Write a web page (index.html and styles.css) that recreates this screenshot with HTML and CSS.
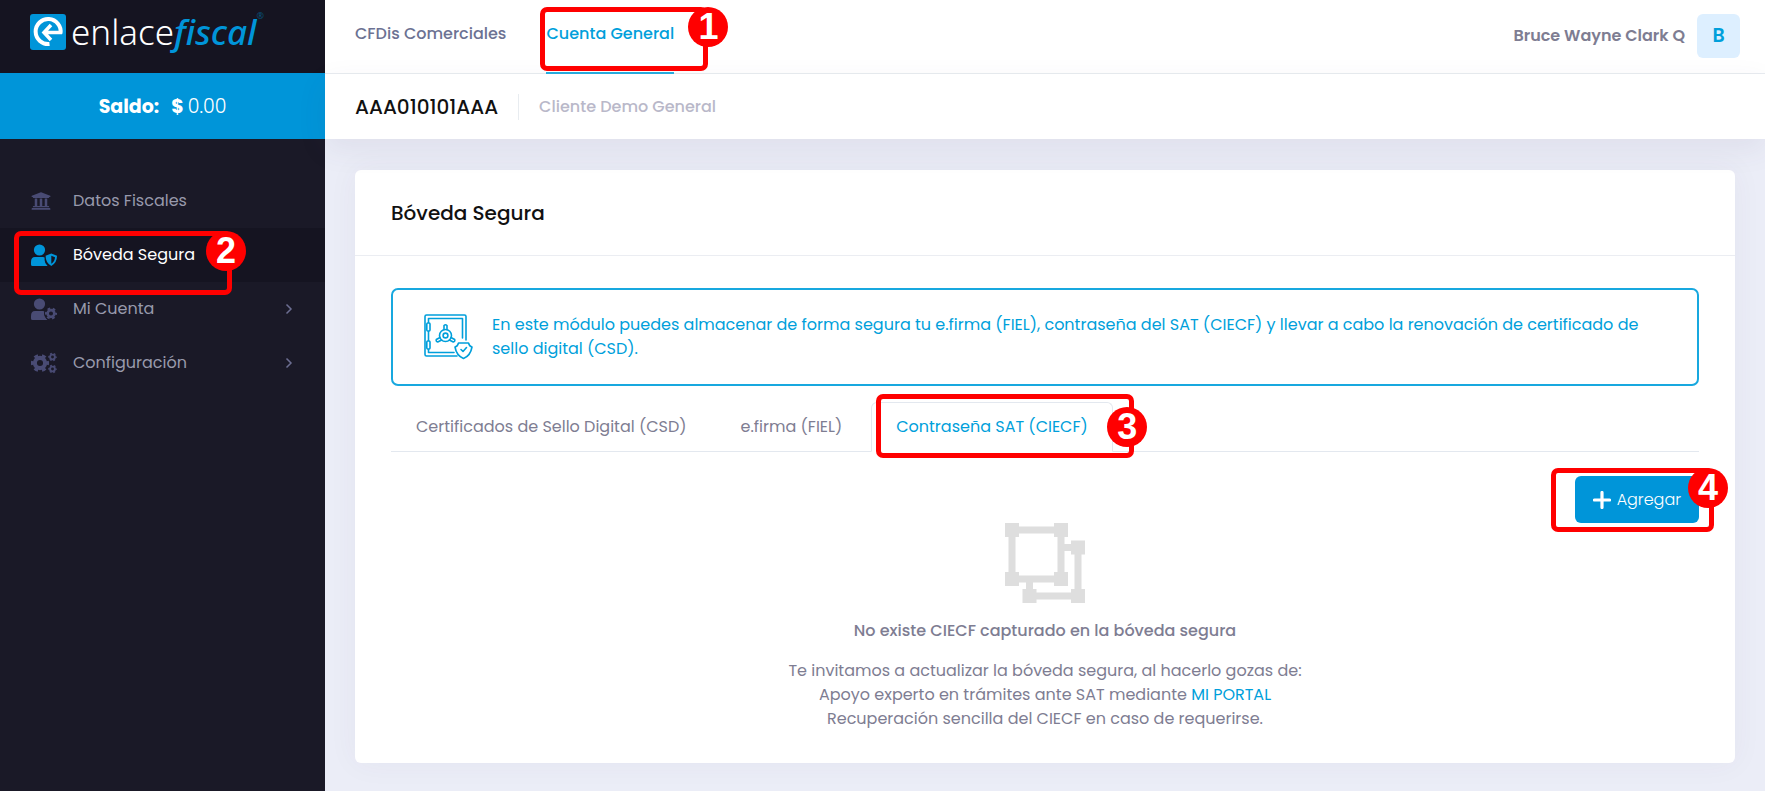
FILE: index.html
```html
<!DOCTYPE html>
<html lang="es">

<head>
    <meta charset="UTF-8" />
    <meta name="viewport" content="width=device-width, initial-scale=1.0" />
    <title>Enlace Fiscal - Bóveda Segura</title>
    <link rel="stylesheet" href="styles.css">
</head>

<body>
    <!-- Shared icon shapes -->
    <svg width="0" height="0" class="icon-defs" aria-hidden="true">
        <defs>
            <g id="gear">
                <circle r="5" fill="none" stroke="currentColor" stroke-width="4" />
                <circle r="7.4" fill="none" stroke="currentColor" stroke-width="3" pathLength="60" stroke-dasharray="5 5" stroke-dashoffset="2.5" />
            </g>
            <g id="user">
                <circle cx="8.5" cy="6" r="5.6" fill="currentColor" />
                <path d="M4 13h8q1 0 1.600 .4v2.600q0 3.500 3 6H1.500Q0 22 0 20.500V18q0-5 4-5z" fill="currentColor" />
            </g>
        </defs>
    </svg>

    <aside class="sidebar">
        <a href="#" class="brand">
            <svg width="36" height="36" viewBox="0 0 36 36" aria-hidden="true">
                <rect width="36" height="36" rx="3" fill="#0095d9" />
                <path d="M30.500 19.500A12.500 12.500 0 1 0 19.500 30" fill="none" stroke="#fff" stroke-width="4" />
                <path d="M32 18.500H15M21 11l-7 7.500 7 7.500" fill="none" stroke="#fff" stroke-width="3.500" />
            </svg>
            <span class="brand-enlace">enlace</span><span class="brand-fiscal">fiscal</span><span class="brand-mark">®</span>
        </a>

        <div class="saldo">
            <strong>Saldo:</strong>
            <strong class="currency">$</strong>
            <span>0.00</span>
        </div>

        <nav class="menu">
            <a href="#" class="menu-item">
                <svg width="20" height="20" viewBox="0 0 512 512" fill="currentColor" aria-hidden="true">
                    <path d="M496 128v16a8 8 0 0 1-8 8h-24v12c0 6.627-5.373 12-12 12H60c-6.627 0-12-5.373-12-12v-12H24a8 8 0 0 1-8-8v-16a8 8 0 0 1 4.941-7.392l232-88a7.996 7.996 0 0 1 6.118 0l232 88A8 8 0 0 1 496 128zm-24 304H40c-13.255 0-24 10.745-24 24v16a8 8 0 0 0 8 8h464a8 8 0 0 0 8-8v-16c0-13.255-10.745-24-24-24zM96 192v192H60c-6.627 0-12 5.373-12 12v20h416v-20c0-6.627-5.373-12-12-12h-36V192h-64v192h-64V192h-64v192h-64V192H96z" />
                </svg>
                <span>Datos Fiscales</span>
            </a>
            <a href="#" class="menu-item active">
                <svg width="26" height="22" viewBox="0 0 26 22" aria-hidden="true">
                    <use href="#user" />
                    <path d="M20.300 9.500l5.700 2.300q0 7-5.700 10.200-5.700-3.200-5.700-10.200z" fill="currentColor" />
                    <path d="M20.300 11.700l3.700 1.500q-.2 4.300-3.700 6.500z" fill="#151421" />
                </svg>
                <span>Bóveda Segura</span>
                <span class="callout callout-menu"><b>2</b></span>
            </a>
            <a href="#" class="menu-item">
                <svg width="26" height="22" viewBox="0 0 26 22" aria-hidden="true">
                    <use href="#user" />
                    <circle cx="20" cy="15.500" r="7" fill="#1a1927" />
                    <use href="#gear" transform="translate(20 15.500) scale(.68)" />
                </svg>
                <span>Mi Cuenta</span>
                <svg class="chevron" width="8" height="12" viewBox="0 0 8 12" aria-hidden="true"><path d="M1.500 1.500L6 6l-4.500 4.500" /></svg>
            </a>
            <a href="#" class="menu-item">
                <svg width="26" height="22" viewBox="0 0 26 22" aria-hidden="true">
                    <use href="#gear" transform="translate(9 11) scale(1.020)" />
                    <use href="#gear" transform="translate(21.500 5) scale(.48)" />
                    <use href="#gear" transform="translate(21.500 17) scale(.48)" />
                </svg>
                <span>Configuración</span>
                <svg class="chevron" width="8" height="12" viewBox="0 0 8 12" aria-hidden="true"><path d="M1.500 1.500L6 6l-4.500 4.500" /></svg>
            </a>
        </nav>
    </aside>

    <div class="wrapper">
        <header class="topbar">
            <nav class="topnav">
                <a href="#">CFDis Comerciales</a>
                <a href="#" class="active">Cuenta General<span class="callout callout-top"><b>1</b></span></a>
            </nav>
            <div class="profile">
                <span>Bruce Wayne Clark Q</span>
                <button type="button" class="avatar">B</button>
            </div>
        </header>

        <div class="subheader">
            <h3>AAA010101AAA</h3>
            <span class="client">Cliente Demo General</span>
        </div>

        <main class="content">
            <section class="card">
                <div class="card-header">
                    <h2>Bóveda Segura</h2>
                </div>
                <div class="card-body">
                    <div class="notice">
                        <svg width="50" height="46" viewBox="0 0 50 46" fill="none" stroke="currentColor" stroke-width="1.600" stroke-linejoin="round" stroke-linecap="round" aria-hidden="true">
                            <path d="M42 26V2.500Q42 1 40.500 1h-38Q1 1 1 2.500v38Q1 42 2.500 42H33" />
                            <path d="M38.500 24V4.500h-34V9M4.500 17v10M4.500 35v3.500H30" />
                            <rect x="2.800" y="9" width="3.200" height="8" rx="1" fill="#fff" />
                            <rect x="2.800" y="27" width="3.200" height="8" rx="1" fill="#fff" />
                            <circle cx="21.500" cy="21.500" r="6" />
                            <circle cx="21.500" cy="21.500" r="2.400" />
                            <path d="M20 15.500v-4q1.500-1.500 3 0v4M16 23.500l-3.700 2q-.6 2 1.400 2.500l4-2M27 23.500l3.700 2q.6 2-1.400 2.500l-4-2" />
                            <path d="M39.500 44.500q-7-2.800-8.500-11.500 2.500-.5 3.500-4h10q1 3.500 3.500 4-1.500 8.700-8.500 11.500z" fill="#fff" />
                            <path d="M37 35.500l2 2 3.500-4" />
                        </svg>
                        <p>En este módulo puedes almacenar de forma segura tu e.firma (FIEL), contraseña del SAT (CIECF) y llevar a cabo la renovación de certificado de sello digital (CSD).</p>
                    </div>

                    <nav class="tabs">
                        <a href="#">Certificados de Sello Digital (CSD)</a>
                        <a href="#">e.firma (FIEL)</a>
                        <a href="#" class="active">Contraseña SAT (CIECF)<span class="callout callout-tab"><b>3</b></span></a>
                    </nav>

                    <div class="actions">
                        <div class="action">
                            <button type="button" class="btn-add">
                                <svg width="18" height="18" viewBox="0 0 18 18" aria-hidden="true"><path d="M9 1.500v15M1.500 9h15" stroke="#fff" stroke-width="3.200" stroke-linecap="round" /></svg>
                                Agregar
                            </button>
                            <span class="callout callout-add"><b>4</b></span>
                        </div>
                    </div>

                    <div class="empty">
                        <svg width="80" height="80" viewBox="0 0 80 80" aria-hidden="true">
                            <path d="M7 7h49v49H7zM56 24.500h17V73H24.500V56" fill="none" stroke="#dedede" stroke-width="7" />
                            <path d="M0 0h14v14H0zM49 0h14v14H49zM0 49h14v14H0zM49 49h14v14H49zM66 17.500h14v14H66zM66 66h14v14H66zM17.500 66h14v14h-14z" fill="#dedede" />
                        </svg>
                        <h4>No existe CIECF capturado en la bóveda segura</h4>
                        <p>
                            Te invitamos a actualizar la bóveda segura, al hacerlo gozas de:<br>
                            Apoyo experto en trámites ante SAT mediante <a href="#">MI PORTAL</a><br>
                            Recuperación sencilla del CIECF en caso de requerirse.
                        </p>
                    </div>
                </div>
            </section>
        </main>
    </div>
</body>

</html>
```

FILE: styles.css
```css
/* Base Styles */
* {
    box-sizing: border-box;
}

body {
    margin: 0;
    min-height: 100vh;
    display: flex;
    background-color: #ebedf7;
    color: #7e7d92;
    font-family: Poppins, Inter, sans-serif;
    font-size: 16px;
    line-height: 24px;
}

a {
    color: #009fdb;
    text-decoration: none;
}

h2,
h3,
h4,
p {
    margin: 0;
}

button {
    border: none;
    font-family: inherit;
    cursor: pointer;
}

.icon-defs {
    position: absolute;
}

/* Sidebar */
.sidebar {
    flex: none;
    width: 325px;
    background-color: #1a1927;
}

.brand {
    display: flex;
    align-items: center;
    height: 73px;
    padding: 0 30px 10px;
    background-color: #151421;
    font-family: "Noto Sans", sans-serif;
    font-size: 35px;
    line-height: 44px;
}

.brand-enlace {
    margin-left: 5px;
    color: #fff;
    font-weight: 300;
}

.brand-fiscal {
    color: #0095d9;
    font-style: italic;
    font-weight: 500;
}

.brand-mark {
    align-self: flex-start;
    color: #08557c;
    font-size: 9px;
    line-height: 32px;
}

.saldo {
    display: flex;
    justify-content: center;
    align-items: center;
    height: 66px;
    padding-top: 2px;
    background-color: #0095d9;
    color: #fff;
    font-size: 19px;
    font-weight: 300;
}

.saldo strong {
    font-weight: 700;
}

.saldo .currency {
    margin: 0 4px 0 12px;
}

.menu {
    padding-top: 35px;
}

.menu-item {
    position: relative;
    display: grid;
    grid-template-columns: 42px 1fr auto;
    align-items: center;
    height: 54px;
    padding: 0 32px 0 31px;
    color: #9899ac;
}

.menu-item svg {
    color: #494b74;
}

.menu-item.active {
    background-color: #151421;
    color: #fff;
}

.menu-item.active svg {
    color: #0095d9;
}

.chevron path {
    fill: none;
    stroke: #6c6e92;
    stroke-width: 1.5;
}

/* Header */
.wrapper {
    flex: 1;
    min-width: 0;
}

.topbar {
    display: flex;
    justify-content: space-between;
    height: 74px;
    padding: 0 25px 0 30px;
    border-bottom: 1px solid #e8ecf0;
    background-color: #fff;
}

.topnav {
    display: flex;
    gap: 40px;
    height: 74px;
}

.topnav a {
    position: relative;
    padding-top: 22px;
    color: #6c7293;
    font-weight: 500;
}

.topnav a.active {
    border-bottom: 2px solid #27ade0;
    color: #009fdb;
}

.profile {
    display: flex;
    align-items: center;
    gap: 12px;
    padding-bottom: 2px;
    font-weight: 600;
}

.avatar {
    width: 43px;
    height: 44px;
    border-radius: 6px;
    background-color: #ddefff;
    color: #009fdb;
    font-size: 19px;
    font-weight: 600;
}

.subheader {
    position: relative;
    display: flex;
    align-items: center;
    height: 65px;
    padding: 0 30px;
    background-color: #fff;
    box-shadow: 0 10px 30px rgba(82, 63, 105, 0.08);
}

.subheader h3 {
    padding-right: 20px;
    border-right: 1px solid #e8ecf0;
    color: #111;
    font-size: 20px;
    font-weight: 500;
    line-height: 26px;
}

.client {
    padding-left: 20px;
    color: #b9b8c9;
    font-weight: 500;
}

/* Card */
.content {
    padding: 31px 30px 29px;
}

.card {
    border-radius: 6px;
    background-color: #fff;
    box-shadow: 0 0 30px rgba(82, 63, 105, 0.05);
}

.card-header {
    display: flex;
    align-items: center;
    height: 86px;
    padding: 0 36px;
    border-bottom: 1px solid #ebedf2;
}

.card-header h2 {
    color: #111;
    font-size: 20px;
    font-weight: 500;
}

.card-body {
    padding: 32px 36px;
}

.notice {
    display: flex;
    align-items: center;
    gap: 18px;
    height: 98px;
    padding: 0 32px 0 31px;
    border: 2px solid #18a8df;
    border-radius: 7px;
    color: #009fdb;
}

.notice svg {
    flex: none;
}

/* Tabs */
.tabs {
    display: flex;
    gap: 4px;
    margin-top: 16px;
    border-bottom: 1px solid #e3e8ef;
}

.tabs a {
    position: relative;
    height: 50px;
    margin-bottom: -1px;
    padding: 12px 24px;
    border: 1px solid transparent;
    border-radius: 6px 6px 0 0;
    color: #7e7d92;
}

.tabs a.active {
    border-color: #e3e8ef;
    border-bottom-color: #fff;
    background-color: #fff;
    color: #009fdb;
}

.actions {
    display: flex;
    justify-content: flex-end;
    margin-top: 24px;
}

.action {
    position: relative;
}

.btn-add {
    display: flex;
    align-items: center;
    gap: 6px;
    height: 47px;
    padding: 0 18px;
    border-radius: 6px;
    background-color: #0095d9;
    color: #fff;
    font-size: 16px;
    font-weight: 300;
}

/* Empty state */
.empty {
    text-align: center;
}

.empty svg {
    display: block;
    margin: 0 auto;
}

.empty h4 {
    margin: 16px 0;
    font-size: 16px;
    font-weight: 500;
}

/* Step callouts drawn over the controls */
.callout {
    position: absolute;
    z-index: 2;
    border: 5px solid #f00;
    border-radius: 7px;
    pointer-events: none;
}

.callout b {
    position: absolute;
    top: -5px;
    right: -11px;
    width: 40px;
    height: 40px;
    border-radius: 50%;
    background-color: #f00;
    color: #fff;
    font-family: "Liberation Sans", Arial, sans-serif;
    font-size: 36px;
    font-weight: 700;
    line-height: 40px;
    text-align: center;
}

.callout-top {
    top: 7px;
    left: -6px;
    width: 168px;
    height: 64px;
}

.callout-top b {
    right: -25px;
}

.callout-menu {
    top: 3px;
    left: 14px;
    width: 218px;
    height: 64px;
}

.callout-menu b {
    right: -19px;
}

.callout-tab {
    top: -9px;
    left: 4px;
    width: 258px;
    height: 64px;
}

.callout-tab b {
    top: 8px;
    right: -18px;
}

.callout-add {
    top: -8px;
    right: -15px;
    width: 163px;
    height: 64px;
}

.callout-add b {
    right: -19px;
}
```
